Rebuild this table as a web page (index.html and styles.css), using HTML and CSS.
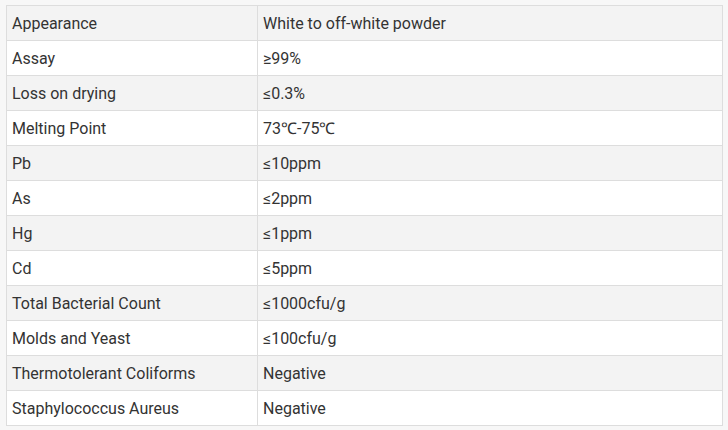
FILE: index.html
```html
<!DOCTYPE html>
<html>
<head>
<meta charset="utf-8">
<link rel="stylesheet" href="styles.css">
</head>
<body>
<div class="wrap">
<table class="spec">
<tr><td class="k">Appearance</td><td>White to off-white powder</td></tr>
<tr><td class="k">Assay</td><td>≥99%</td></tr>
<tr><td class="k">Loss on drying</td><td>≤0.3%</td></tr>
<tr><td class="k">Melting Point</td><td>73℃-75℃</td></tr>
<tr><td class="k">Pb</td><td>≤10ppm</td></tr>
<tr><td class="k">As</td><td>≤2ppm</td></tr>
<tr><td class="k">Hg</td><td>≤1ppm</td></tr>
<tr><td class="k">Cd</td><td>≤5ppm</td></tr>
<tr><td class="k">Total Bacterial Count</td><td>≤1000cfu/g</td></tr>
<tr><td class="k">Molds and Yeast</td><td>≤100cfu/g</td></tr>
<tr><td class="k">Thermotolerant Coliforms</td><td>Negative</td></tr>
<tr><td class="k">Staphylococcus Aureus</td><td>Negative</td></tr>
</table>
</div>
</body>
</html>
```
FILE: styles.css
```css
html, body {
  margin: 0;
  padding: 0;
  background: #f7f7f7;
}
.wrap {
  padding: 5px 6px 0 6px;
}
.spec {
  width: 717px;
  border-collapse: collapse;
  font-family: Roboto, "Liberation Sans", sans-serif;
  font-size: 16px;
  color: #333;
  background: #fff;
  border: 1px solid #ddd;
}
.spec td {
  height: 35px;
  padding: 0 5px;
  border: 1px solid #ddd;
  box-sizing: border-box;
  vertical-align: middle;
}
.spec td.k {
  width: 251px;
}
.spec tr:nth-child(odd) td {
  background: #f3f3f3;
}
```
